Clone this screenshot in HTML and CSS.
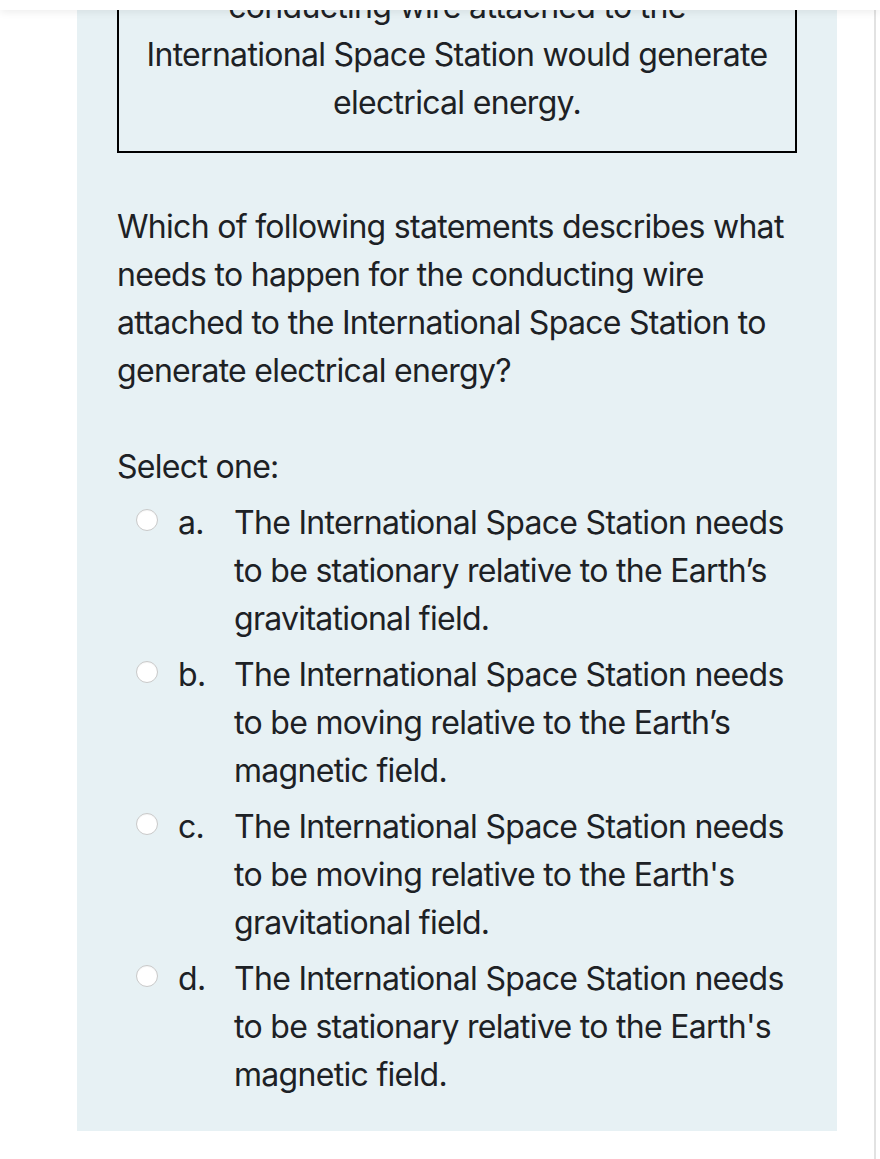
FILE: index.html
```html
<!DOCTYPE html>
<html lang="en">
<head>
<meta charset="utf-8">
<link rel="stylesheet" href="styles.css">
</head>
<body>
<div class="header"></div>
<div class="main">
  <div class="panel">
    <div class="box">
      <p>conducting wire attached to the International Space Station would generate electrical energy.</p>
    </div>
    <p class="question">Which of following statements describes what needs to happen for the conducting wire attached to the International Space Station to generate electrical energy?</p>
    <p class="prompt">Select one:</p>
    <div class="answers">
      <div class="opt"><span class="radio"></span><span class="letter">a.</span><span class="text">The International Space Station needs to be stationary relative to the Earth’s gravitational field.</span></div>
      <div class="opt"><span class="radio"></span><span class="letter">b.</span><span class="text">The International Space Station needs to be moving relative to the Earth’s magnetic field.</span></div>
      <div class="opt"><span class="radio"></span><span class="letter">c.</span><span class="text">The International Space Station needs to be moving relative to the Earth's gravitational field.</span></div>
      <div class="opt"><span class="radio"></span><span class="letter">d.</span><span class="text">The International Space Station needs to be stationary relative to the Earth's magnetic field.</span></div>
    </div>
  </div>
</div>
</body>
</html>
```
FILE: styles.css
```css
html, body {
  margin: 0;
  padding: 0;
  background: #fff;
}
body {
  font-family: Inter, "Noto Sans", sans-serif;
  font-size: 32px;
  line-height: 48px;
  letter-spacing: -0.7px;
  color: #1d2125;
  overflow: hidden;
  height: 1159px;
}
.header {
  position: fixed;
  top: 0;
  left: 0;
  right: 0;
  height: 10px;
  background: #fff;
  box-shadow: 0 2px 8px rgba(0, 0, 0, 0.08);
  z-index: 2;
}
.main {
  width: 876px;
  border-right: 2px solid #e2e2e2;
  margin-top: -67px;
  min-height: 1226px;
  box-sizing: border-box;
}
.panel {
  margin-left: 77px;
  width: 680px;
  background: #e7f1f4;
  padding: 24px 40px 32px;
}
.box {
  border: 2px solid #000;
  padding: 24px 20px;
  text-align: center;
}
p {
  margin: 0;
}
.question {
  margin-top: 50px;
}
.prompt {
  margin-top: 48px;
}
.answers {
  margin-top: 8px;
  display: flex;
  flex-direction: column;
  gap: 8px;
}
.opt {
  display: flex;
  align-items: flex-start;
  padding-left: 19px;
}
.radio {
  flex: none;
  width: 20px;
  height: 20px;
  border: 1px solid #c9c9c9;
  border-radius: 50%;
  background: #fff;
  margin-top: 10px;
  box-shadow: inset 0 1px 1px rgba(0,0,0,0.04);
}
.letter {
  flex: none;
  width: 56px;
  margin-left: 20px;
}
.text {
  flex: 1;
}
```
